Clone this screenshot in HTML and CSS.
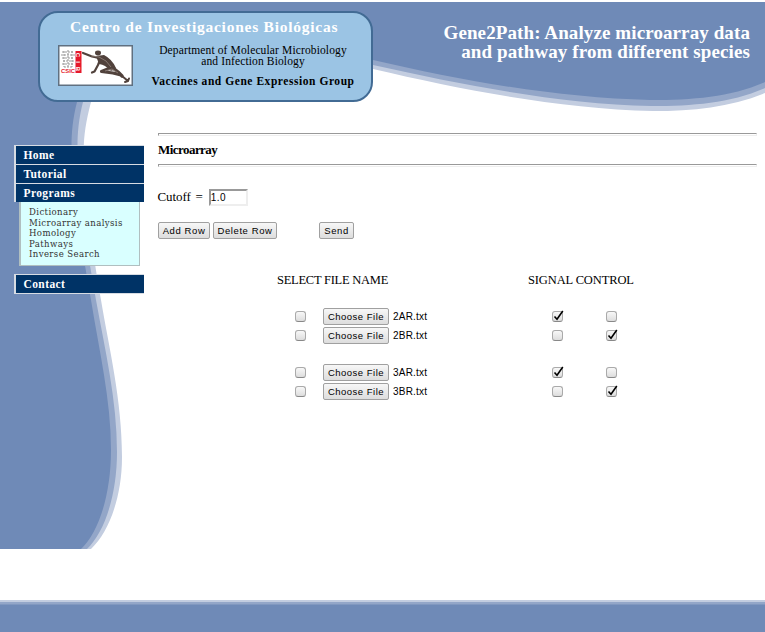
FILE: index.html
```html
<!DOCTYPE html>
<html lang="en">
<head>
<meta charset="utf-8">
<title>Gene2Path</title>
<link rel="stylesheet" href="styles.css">
</head>
<body>
<svg class="backdrop" width="765" height="632" viewBox="0 0 765 632" aria-hidden="true">
  <path fill="#c3cde0" d="M0 2H765V93C731 107 693 111 653 111C560 109 463 90 373 69L120 69Q98 80 91 102C85 125 83 140 84 160C85 200 93 255 101 300C109 348 122 400 122 457C122 497 109 532 91 549H0Z"/>
  <path fill="#93a6c8" d="M0 2H765V88C731 103 693 106 651 106C560 104 463 85 373 65L120 65Q90 78 83 102C77 125 77 145 78 160C79 205 89 260 96 300C105 350 117 400 117 452C117 494 105 532 87 549H0Z"/>
  <path fill="#6f8ab7" d="M0 2H765V82C731 97 693 100 650 100C560 98 463 81 373 60L120 60Q83 76 77 102C71 125 71 145 72 160C74 205 84 260 91 300C99 350 111 400 111 450C111 494 99 532 81 549H0Z"/>
</svg>
<header class="top">
  <div class="banner">
    <div class="center-name">Centro de Investigaciones Biológicas</div>
    <div class="banner-row">
      <svg class="logo" width="75" height="41" viewBox="0 0 75 41">
        <rect x=".75" y=".75" width="73.5" height="39.5" fill="#fff" stroke="#607080" stroke-width="1.5"/>
        <g fill="none" stroke="#9c9c9c" stroke-width="1.1" stroke-dasharray="2 1"><path d="M4 7H16M3 10H17M4 13H16M5 16H16M4 19H16M6 22H15"/><path d="M6 6V22M10 5V22M14 6V22"/></g>
        <rect x="17.5" y="6" width="6" height="22" fill="#e5182b"/>
        <g fill="#fff" font-family="Liberation Sans" font-weight="bold" font-size="6" text-anchor="middle"><text transform="translate(18.4 10) rotate(90)">C</text><text transform="translate(18.4 17) rotate(90)">I</text><text transform="translate(18.4 24) rotate(90)">B</text></g>
        <text x="3" y="28.3" fill="#e5182b" font-family="Liberation Sans" font-weight="bold" font-size="6" textLength="14" lengthAdjust="spacingAndGlyphs">CSIC</text>
        <g fill="none" stroke="#51423c" stroke-linecap="round" stroke-linejoin="round">
          <path stroke-width="2.2" d="M25 8L34 11.5L41 13"/>
          <path stroke-width="2.2" d="M42 15L40 20L36.5 26.5L34 27.5"/>
          <path stroke-width="3.2" d="M55 22L46 25.5L43.5 26.5L55 28L61 29.5"/>
          <path stroke-width="3.4" d="M55 23L60 27L64 31"/>
          <path stroke-width="2" d="M64 31L70 36L67 37M70 36L71 33.5"/>
        </g>
        <path fill="#51423c" d="M38 11L46 10Q54 14 58 23Q55 27 51 25Q48 20 41 19Z"/>
        <ellipse cx="40" cy="8" rx="3" ry="2.4" fill="#51423c"/>
        <path fill="none" stroke="#92847c" stroke-width=".8" d="M33 10.8L41 12L48 16L53 22M47 26L54 24L60 28"/>
      </svg>
      <div class="department">
        <div class="dept-line">Department of Molecular Microbiology</div>
        <div class="dept-line">and Infection Biology</div>
        <div class="group">Vaccines and Gene Expression Group</div>
      </div>
    </div>
  </div>
  <h1 class="title">Gene2Path: Analyze microarray data<br>and pathway from different species</h1>
</header>
<div class="page">
  <nav class="nav">
    <a class="item">Home</a>
    <a class="item">Tutorial</a>
    <a class="item">Programs</a>
    <div class="submenu">
      <a>Dictionary</a><a>Microarray analysis</a><a>Homology</a><a>Pathways</a><a>Inverse Search</a>
    </div>
    <a class="item last">Contact</a>
  </nav>
  <main class="main">
    <div class="rule"></div>
    <h2 class="heading">Microarray</h2>
    <div class="rule"></div>
    <div class="cutoff"><span class="cut-label">Cutoff</span><span>=</span><input class="field" value="1.0"></div>
    <div class="actions"><button class="btn add">Add Row</button><button class="btn del">Delete Row</button><button class="btn send">Send</button></div>
    <div class="grid head"><span class="c-all">SELECT FILE NAME</span><span class="c-sc">SIGNAL CONTROL</span></div>
    <div class="grid row"><i class="check"></i><button class="btn choose">Choose File</button><span class="file">2AR.txt</span><i class="check on"></i><i class="check"></i></div>
    <div class="grid row"><i class="check"></i><button class="btn choose">Choose File</button><span class="file">2BR.txt</span><i class="check"></i><i class="check on"></i></div>
    <div class="grid row gap"><i class="check"></i><button class="btn choose">Choose File</button><span class="file">3AR.txt</span><i class="check on"></i><i class="check"></i></div>
    <div class="grid row"><i class="check"></i><button class="btn choose">Choose File</button><span class="file">3BR.txt</span><i class="check"></i><i class="check on"></i></div>
  </main>
</div>
<footer class="footer"></footer>
<script src="checks.js"></script>
</body>
</html>
```
FILE: styles.css
```css
* { box-sizing: border-box; }
body { margin: 0; width: 765px; height: 632px; overflow: hidden; background: #fff; color: #000; font-family: "Liberation Serif", serif; display: flex; flex-direction: column; }
.backdrop { position: absolute; left: 0; top: 0; z-index: -1; }
.top { display: flex; justify-content: space-between; height: 132px; padding: 11px 15px 0 38px; }
.banner { width: 335px; height: 91px; border: 2px solid #426b94; border-radius: 20px; background: #9bc4e4; }
.center-name { margin: 5px 0 0 30px; font-size: 15.5px; line-height: 18px; font-weight: bold; color: #fff; letter-spacing: .75px; white-space: nowrap; }
.banner-row { display: flex; }
.logo { margin: 9px 0 0 18px; flex: none; }
.department { width: 206px; margin: 9px 0 0 17px; text-align: center; white-space: nowrap; }
.dept-line { font-size: 11.5px; line-height: 11px; letter-spacing: .13px; }
.group { margin-top: 8px; font-size: 11.5px; line-height: 13px; font-weight: bold; letter-spacing: .55px; }
.title { margin: 12px 0 0; color: #fff; font-size: 19px; line-height: 19px; font-weight: bold; letter-spacing: .1px; text-align: right; white-space: nowrap; }
.page { display: flex; height: 468px; }
.nav { width: 144px; padding: 13px 0 0 14px; }
.item { display: block; height: 19px; border: solid #d7dce3; border-width: 1px 0 0 2px; background: #036; color: #fff; padding-left: 7.5px; font-size: 11.5px; line-height: 18px; font-weight: bold; letter-spacing: .4px; }
.submenu { margin: 0 4px 8px 5px; height: 64px; padding: 5px 0 0 8px; background: #d9ffff; border: solid #b0bfc0; border-width: 0 1px 1px 2px; color: #333; font-family: "DejaVu Serif Condensed", "DejaVu Serif", serif; font-size: 9.5px; line-height: 10.5px; letter-spacing: .4px; }
.submenu a { display: block; white-space: nowrap; }
.last { height: 20px; border-bottom: 1px solid #d7dce3; }
.main { width: 599px; margin-left: 14px; padding-top: 1px; }
.rule { height: 3px; border: 1px solid #eee; border-top-color: #999; border-left-color: #999; }
.heading { margin: 5px 0 7px; height: 16px; font-size: 13px; line-height: 18px; font-weight: bold; letter-spacing: -.55px; }
.cutoff { display: flex; align-items: center; height: 18px; margin-top: 21px; font-size: 13px; letter-spacing: -.1px; }
.cut-label { margin: 0 5px 0 -.5px; }
.field { width: 39px; height: 17px; margin-left: 6px; padding: 0; border: 2px solid #eee; border-top-color: #999; border-left-color: #999; font: 10px "Liberation Sans", sans-serif; letter-spacing: .4px; }
.actions { display: flex; margin-top: 16px; }
.btn { height: 17px; padding: 0; border: 1px solid #a0a0a0; border-radius: 2px; background: linear-gradient(#f7f7f7, #ddd); color: #000; font: 9.5px/15px "Liberation Sans", sans-serif; letter-spacing: .6px; white-space: nowrap; text-align: center; }
.add { width: 52px; }
.del { width: 64px; margin-left: 3px; }
.send { width: 35px; margin-left: 42px; }
.grid { display: grid; align-items: center; }
.head { grid-template-columns: 251px 1fr; margin: 33px 0 19px 119px; height: 16px; font-size: 12.5px; line-height: 16px; white-space: nowrap; }
.c-all { letter-spacing: -.25px; }
.c-sc { letter-spacing: -.12px; }
.row { grid-template-columns: 28px 66px 163px 54px 11px; height: 19px; margin-left: 137px; }
.gap { margin-top: 18px; }
.choose { width: 66px; letter-spacing: .5px; }
.file { padding-left: 4px; font: 10px "Liberation Sans", sans-serif; letter-spacing: .2px; }
.check { display: block; width: 11px; height: 11px; border: 1px solid #aaa; border-bottom-color: #888; border-radius: 3px; background: linear-gradient(#f8f8f8, #ddd); }
.check svg { display: block; overflow: visible; }
.footer { height: 32px; background: linear-gradient(#c3cde0 0 2px, #93a6c8 2px 4px, #6f8ab7 5px); }
```
FILE: checks.js
```js
for (const box of document.querySelectorAll('.check.on')) {
  box.innerHTML = '<svg width="11" height="11" viewBox="0 0 11 11"><path d="M1.5 4.5L4 7.2L9.8-1" fill="none" stroke="#000" stroke-width="1.6"/></svg>';
}
```
